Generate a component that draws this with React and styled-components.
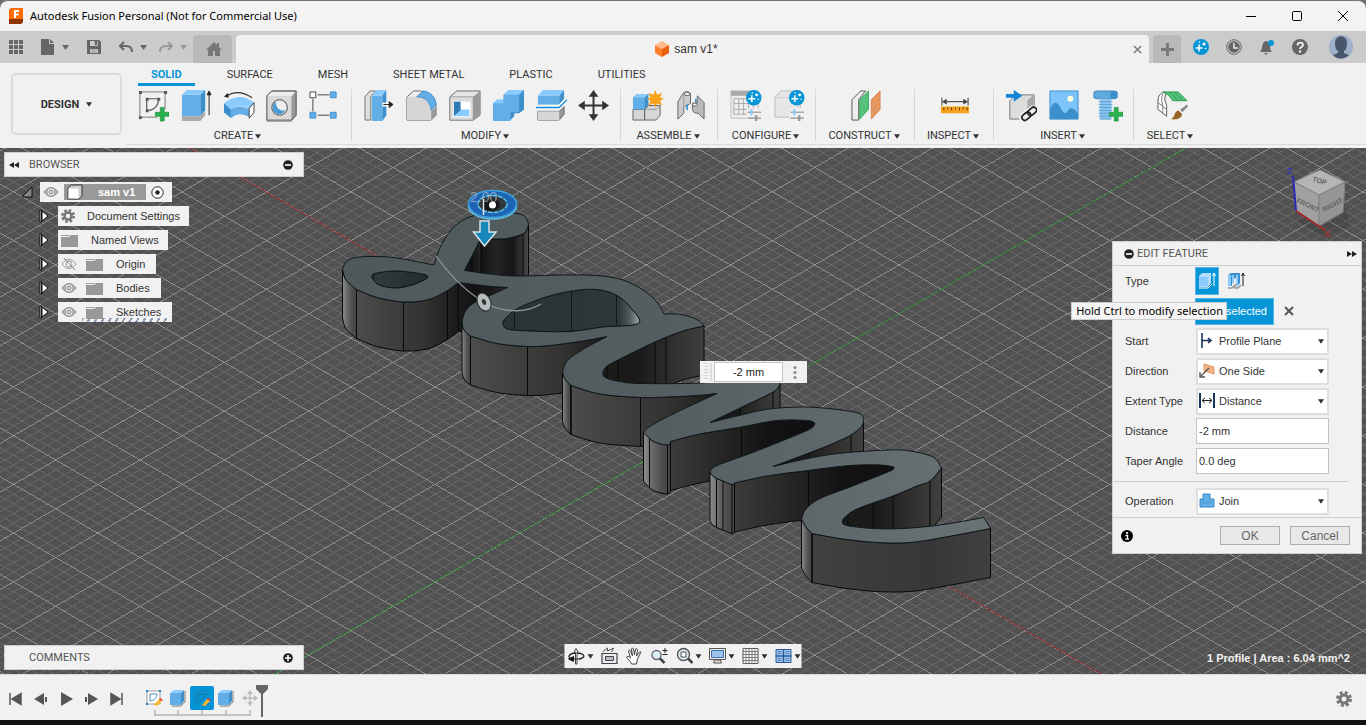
import React from "react";
import styled, { createGlobalStyle } from "styled-components";

const ui = `"Liberation Sans", Arial, sans-serif`;
const caps = `Roboto, "Liberation Sans", sans-serif`;
const system = `"Noto Sans", "Open Sans", sans-serif`;

/* ---------- ribbon icons ---------- */

const Plus = ({ x, y }) => (
  <path
    d={`M${x - 2} ${y - 7}h4v5h5v4h-5v5h-4v-5h-5v-4h5z`}
    fill="#2bb24c"
    stroke="#189339"
    strokeWidth="0.7"
  />
);

const SpinBadge = ({ x, y }) => (
  <g>
    <circle cx={x} cy={y} r="8" fill="#0696d7" />
    <path
      d={`M${x - 2} ${y - 2.5}v7M${x - 5.5} ${y + 1}h7M${x + 3} ${y - 4.5}v3M${x + 1.5} ${y - 3}h3`}
      stroke="#fff"
      strokeWidth="1.6"
    />
    <circle cx={x - 1.5} cy={y - 5} r="0.8" fill="#fff" />
    <circle cx={x + 4.5} cy={y + 1.5} r="0.8" fill="#fff" />
  </g>
);

const icons = {
  sketch: (
    <>
      <path d="M3 2h26v18M3 2v26h18" fill="none" stroke="#777" />
      <path d="M10 9h12M10 9v12M22 10c0 6-4 11-11 11" fill="none" stroke="#555" strokeWidth="1.2" />
      <path
        d="M2 1h3v3H2zM28 1h3v3h-3zM2 27h3v3H2zM9 8h3v3H9zM21 8h3v3h-3zM9 20h3v3H9z"
        fill="#555"
      />
      <Plus x={26} y={25} />
    </>
  ),
  extrude: (
    <>
      <path d="M2 27h19l5-5v4l-5 6H2z" fill="#aaa" />
      <path d="M2 5h19v22H2z" fill="#63aee6" />
      <path d="M2 5l5-5h19l-5 5z" fill="#8acbff" />
      <path d="M21 5l5-5v21l-5 6z" fill="#3d8fcb" />
      <path d="M30 26V3M28 5l2-4 2 4z" stroke="#222" fill="#222" />
    </>
  ),
  revolve: (
    <>
      <path d="M4 6c8-5 17-4 26 2" fill="none" stroke="#333" strokeWidth="1.2" />
      <path d="M1 7l4-4 1 5z" fill="#222" />
      <path d="M1 14C10 5 23 5 32 13l-5 7C20 15 14 16 8 20z" fill="#8acbff" />
      <path d="M1 14l7 6c6-4 12-4 19 0v8c-7-4-13-4-18 1l-8-6z" fill="#63aee6" />
      <path d="M1 14l7 6v9l-7-6z" fill="#3d8fcb" />
      <path d="M27 19l5-6v10l-5 6z" fill="#fff" stroke="#444" />
    </>
  ),
  hole: (
    <>
      <path d="M1 6l5-5h25v25l-5 6H1z" fill="#eee" stroke="#666" />
      <path d="M26 7l5-6v25l-5 5z" fill="#999" />
      <path d="M1 6h25v25H1z" fill="#d9d9d9" />
      <circle cx="14" cy="18" r="8" fill="#eee" stroke="#444" />
      <path d="M10 12a7 7 0 1 0 10 9c-6 1-10-3-10-9z" fill="#4a9ad6" />
      <path d="M1 6l5-5h25v25l-5 5H1z" fill="none" stroke="#666" />
    </>
  ),
  pattern: (
    <>
      <path d="M9 5h12M4 9v13M9 26h12" stroke="#444" />
      <path d="M1 2h6v6H1z" fill="#fff" stroke="#444" />
      <path d="M22 2h6v6h-6zM1 23h6v6H1zM22 23h6v6h-6z" fill="#63aee6" stroke="#4192cf" />
    </>
  ),
  pressPull: (
    <>
      <path d="M2 7l5-6h6L8 7v24H2z" fill="#ddd" stroke="#777" />
      <path d="M9 6h11v26H9z" fill="#63aee6" />
      <path d="M9 6l5-6h10l-4 6z" fill="#8acbff" />
      <path d="M20 6l4-6v26l-4 6z" fill="#3d8fcb" />
      <path d="M20 15h9" stroke="#fff" strokeWidth="4" />
      <path d="M21 15h7M27 12l4 3-4 3z" stroke="#222" fill="#222" />
    </>
  ),
  fillet: (
    <>
      <path d="M1 7l7-6h6c10 1 17 8 17 17v8l-5 5H1z" fill="#eee" stroke="#666" />
      <path d="M1 7h10c9 0 15 6 15 14v10H1z" fill="#d6d6d6" />
      <path d="M26 22l5-5v9l-5 5z" fill="#999" />
      <path d="M11 7l7-6c8 1 13 8 13 14l-5 6c-1-9-6-14-15-14z" fill="#63aee6" stroke="#3d8fcb" />
    </>
  ),
  shell: (
    <>
      <path d="M1 7l7-6h24v25l-7 5H1z" fill="#e6e6e6" stroke="#666" />
      <path d="M25 7l7-6v25l-7 5z" fill="#999" />
      <path d="M1 7h24v24H1z" fill="#dcdcdc" stroke="#777" strokeWidth="0.6" />
      <path d="M4 12h18v16H4z" fill="#fff" />
      <path d="M5 12h7v10l-7 5z" fill="#2f79b5" />
      <path d="M12 20h9v7H5l7-6z" fill="#8acbff" />
    </>
  ),
  combine: (
    <>
      <path d="M1 14l4-4h7V5l5-5h16v20l-5 4h-5v3l-5 5H1z" fill="#3d8fcb" />
      <path d="M1 14h11V5h16v18h-9v9H1z" fill="#63aee6" />
      <path d="M12 5l5-5h16l-5 5zM1 14l4-4h7v4z" fill="#8acbff" />
    </>
  ),
  split: (
    <>
      <path d="M3 22h22l5-5v8l-5 6H3z" fill="#999" stroke="#666" />
      <path d="M3 22h22v9H3z" fill="#d6d6d6" />
      <path d="M3 6l5-6h22l-5 6z" fill="#8acbff" />
      <path d="M3 6h22v9H3z" fill="#63aee6" />
      <path d="M25 6l5-6v9l-5 6z" fill="#3d8fcb" />
      <path d="M1 18h24l8-8" fill="none" stroke="#fff" strokeWidth="4" />
      <path d="M1 18h24l8-8" fill="none" stroke="#1584d6" strokeWidth="1.4" />
    </>
  ),
  move: (
    <>
      <path d="M16 4v24M4 16h24" stroke="#333" strokeWidth="2" />
      <path d="M16 0l5 7H11zM16 32l5-7H11zM0 16l7-5v10zM32 16l-7-5v10z" fill="#333" />
    </>
  ),
  newComponent: (
    <>
      <path d="M1 20h12v11H1zM13 20l4-4h12v10l-4 5H13z" fill="#d6d6d6" stroke="#666" />
      <path d="M13 20h12l4-4" fill="none" stroke="#999" />
      <path d="M1 8l4-4h12v11l-4 5H1z" fill="#3d8fcb" />
      <path d="M1 8h12v12H1z" fill="#63aee6" />
      <path d="M1 8l4-4h12l-4 4z" fill="#8acbff" />
      <path
        d="M24 0l2 5 5-2-2 5 4 1-4 2 2 5-5-2-2 4-2-4-5 2 2-5-4-2 4-1-2-5 5 2z"
        fill="#f9a11b"
      />
    </>
  ),
  joint: (
    <>
      <path d="M3 12L8 4c1-3 7-3 8 0v10l-4 2-3 2v6l-6 6z" fill="#ccc" stroke="#666" />
      <path d="M9 5v12" stroke="#999" />
      <ellipse cx="12.500" cy="4" rx="3" ry="1.800" fill="#eee" stroke="#666" />
      <path d="M12.500 15v6M21.500 9v5" stroke="#1584d6" strokeWidth="1.4" />
      <path d="M23 6l7 7v17l-6-6c-3 0-6-1-6-4v-6l5-1z" fill="#bbb" stroke="#666" />
      <ellipse cx="20.500" cy="15" rx="2.500" ry="1.600" fill="#eee" stroke="#666" />
    </>
  ),
  configTable: (
    <>
      <path d="M1 1h28v28H1z" fill="#eee" stroke="#bbb" />
      <path d="M1 1h28v5H1z" fill="#aaa" />
      <path d="M4 9h20v16H4zM9 9v16M14 9v16M19 9v16M4 14h20M4 20h20" fill="none" stroke="#aaa" />
      <path d="M17 19h16v13H17z" fill="#f1f1f1" />
      <path d="M18 23h14M18 29h14" stroke="#aaa" strokeWidth="1.6" />
      <path d="M22 20v6" stroke="#8acbff" strokeWidth="2.5" />
      <path d="M27 26v6" stroke="#999" strokeWidth="2.5" />
      <SpinBadge x={24.5} y={8} />
    </>
  ),
  configBox: (
    <>
      <path d="M2 8l6-7h20v20l-5 7H2z" fill="#e6e6e6" stroke="#bbb" />
      <path d="M2 8h20" stroke="#ccc" />
      <path d="M17 19h16v13H17z" fill="#f1f1f1" />
      <path d="M18 23h14M18 29h14" stroke="#aaa" strokeWidth="1.6" />
      <path d="M22 20v6" stroke="#8acbff" strokeWidth="2.5" />
      <path d="M27 26v6" stroke="#999" strokeWidth="2.5" />
      <SpinBadge x={24.5} y={8} />
    </>
  ),
  construct: (
    <>
      <path d="M2 10l9-9h5L9 10v21H2z" fill="#eee" stroke="#555" />
      <path d="M10 10l9-9v19l-9 10z" fill="#57c27c" stroke="#3ca862" />
      <path d="M22 10l9-9v19l-9 10z" fill="#e6965f" stroke="#d98550" />
    </>
  ),
  measure: (
    <>
      <path d="M3 8v8M30 8v8M5 12h23" stroke="#555" strokeWidth="1.2" />
      <path d="M3 12l5-3v6zM30 12l-5-3v6z" fill="#444" />
      <path d="M2 17h29v7H2z" fill="#f9a11b" />
      <path d="M5 18v3M9 18v2M13 18v3M17 18v2M21 18v3M25 18v2M29 18v3" stroke="#5a3a00" />
    </>
  ),
  insertLink: (
    <>
      <path d="M5 11l6-6h19v17l-6 8H5z" fill="#ddd" stroke="#777" />
      <path d="M23 11l7-7v18l-7 8z" fill="#aaa" />
      <path d="M1 4h8V0l9 6-9 6V8H1z" fill="#1584d6" />
      <g fill="none" stroke="#f1f1f1" strokeWidth="6">
        <rect x="17" y="24" width="10" height="6" rx="3" transform="rotate(-40 22 27)" />
        <rect x="23" y="20" width="10" height="6" rx="3" transform="rotate(-40 28 23)" />
      </g>
      <g fill="none" stroke="#222" strokeWidth="1.8">
        <rect x="17" y="24" width="10" height="6" rx="3" transform="rotate(-40 22 27)" />
        <rect x="23" y="19" width="10" height="6" rx="3" transform="rotate(-40 28 22)" />
      </g>
    </>
  ),
  canvas: (
    <>
      <path d="M2 1h29v29H2z" fill="#7cc4fa" />
      <path d="M2 20c4-9 7-9 12 0 2 4 4 5 6 2 3-5 6-4 11 2v6H2z" fill="#3d8fcb" />
      <circle cx="23" cy="9" r="3" fill="#ffffe0" />
      <path d="M2 1h29v29H2z" fill="none" stroke="#3d8fcb" />
    </>
  ),
  bolt: (
    <>
      <path d="M3 2l3-1h18l3 1v6l-3 1H6L3 8z" fill="#5ea9dd" stroke="#2f79b5" strokeWidth="0.8" />
      <path d="M20 1h4l3 1v6l-3 1h-4z" fill="#3d8fcb" />
      <path d="M9 9h12v21H9z" fill="#8cc4ec" />
      <path d="M8 12h14M8 15h14M8 18h14M8 21h14M8 24h14M8 27h14M9 30h12" stroke="#5ba4da" />
      <Plus x={26} y={25} />
    </>
  ),
  select: (
    <>
      <path d="M2 13c0-7 2-10 8-11l-1 8 2 6v11L2 20z" fill="#fff" stroke="#555" />
      <path d="M2 13l9 7M7 4c-2 4-1 8 0 13v7" fill="none" stroke="#777" />
      <path d="M7 2h16l9 9H17C15 7 12 4 7 2z" fill="#57c27c" stroke="#2b9a50" />
      <path d="M14 2l9 9M19 2l9 9" stroke="#2b9a50" />
      <path d="M25 20l7-5 1 2-6 6z" fill="#888" />
      <path d="M15 30c5-1 3-7 8-9l4 4c-1 5-7 6-12 5z" fill="#9a6427" />
    </>
  ),
};

const Icon = ({ name, size = 32 }) => (
  <IconSvg viewBox="0 0 33 33" width={size} height={size} aria-hidden="true">
    {icons[name]}
  </IconSvg>
);

const Caret = ({ color = "#333", size = 7 }) => (
  <IconSvg viewBox="0 0 7 5" width={size} height="5" aria-hidden="true">
    <path d="M0 0h7L3.500 5z" fill={color} />
  </IconSvg>
);

const groups = [
  { name: "CREATE", icons: ["sketch", "extrude", "revolve", "hole", "pattern"] },
  { name: "MODIFY", icons: ["pressPull", "fillet", "shell", "combine", "split", "move"] },
  { name: "ASSEMBLE", icons: ["newComponent", "joint"] },
  { name: "CONFIGURE", icons: ["configTable", "configBox"], width: 98 },
  { name: "CONSTRUCT", icons: ["construct"], width: 99 },
  { name: "INSPECT", icons: ["measure"], width: 79 },
  { name: "INSERT", icons: ["insertLink", "canvas", "bolt"] },
  { name: "SELECT", icons: ["select"], width: 74 },
];

const tabs = ["SOLID", "SURFACE", "MESH", "SHEET METAL", "PLASTIC", "UTILITIES"];

/* ---------- 3D scene ---------- */

const DEPTH = 49;

// Outline of the extruded lettering, split into runs at its corners.
// Runs that face the viewer carry a wall shade and the x of their seams.
const outline = [
  { pts: [[342.500, 269], [346, 262], [356, 257.500], [375, 256.500], [397, 258], [434, 265]] },
  { pts: [[434, 265], [440, 248], [451, 230], [466, 218.500], [484, 214], [505, 213], [521.500, 214.500], [527, 220], [528.500, 225]] },
  { pts: [[528.500, 225], [525, 232.500], [517, 236], [507, 238.500], [496, 239], [481, 238]], wall: "dark", seams: [523, 481] },
  { pts: [[481, 238], [474, 252], [464.500, 270.500]], wall: "black", seams: [472] },
  { pts: [[464.500, 270.500], [490, 274], [517, 276], [560, 275], [597, 275.500], [623, 280], [643, 290], [657, 302], [664, 314]] },
  { pts: [[664, 314], [681, 314.500], [697, 319.500], [704, 326]] },
  { pts: [[704, 326], [683, 331], [655, 342], [618, 360], [606, 367], [603, 372]], wall: "inner", seams: [666, 655, 618] },
  { pts: [[603, 372], [604.500, 377], [617, 381], [640, 383.500], [700, 383], [740, 379], [770, 379], [780, 384]] },
  { pts: [[780, 384], [773, 392], [740, 408], [710, 422.500]], wall: "inner", seams: [773, 740] },
  { pts: [[710, 422.500], [737, 416], [763, 410], [787, 407.500], [817, 407.500], [858, 413], [863.500, 422]] },
  { pts: [[863.500, 422], [861, 427], [851, 435], [833, 443.500], [809, 453], [773, 466.500]], wall: "inner", seams: [851, 809] },
  { pts: [[773, 466.500], [810, 458], [843, 453], [888, 450], [910, 451], [933, 457], [941.500, 468]] },
  { pts: [[941.500, 468], [930, 481], [917, 486], [893, 496], [870, 504], [853, 511], [843, 519]], wall: "inner", seams: [930, 893, 873, 848] },
  { pts: [[843, 519], [845, 525], [873, 528.500], [903, 528.500], [940, 525], [984, 517.500]] },
  { pts: [[984, 517.500], [990.500, 528.500]] },
  { pts: [[990.500, 528.500], [943, 537.500], [910, 542.500], [877, 542.500], [843, 539], [812, 533.500]], wall: "flat", seams: [812] },
  { pts: [[812, 533.500], [806, 527], [801.500, 519]], wall: "edge" },
  { pts: [[801.500, 519], [806, 509], [820, 498.500], [850, 487], [883, 474], [893, 469.500], [894, 467]] },
  { pts: [[894, 467], [880, 465], [850, 465.500], [808, 470.500], [767, 476], [734.500, 483]], wall: "deep", seams: [808.500, 734.500] },
  { pts: [[734.500, 483], [732, 484.500], [723, 481], [714, 477], [710, 472]], wall: "edge", seams: [732, 723, 716.500] },
  { pts: [[710, 472], [717, 465.500], [750, 453.500], [783, 440.500], [810, 429], [815, 423]] },
  { pts: [[815, 423], [807, 420.500], [777, 420.500], [741.500, 427], [700, 434], [670.500, 441.500]], wall: "deep", seams: [741.500, 670.500] },
  { pts: [[670.500, 441.500], [667.500, 445], [653.500, 441.500], [643.500, 432.500]], wall: "edge", seams: [667.500, 649.500] },
  { pts: [[643.500, 432.500], [649, 427], [667, 417], [693, 404.500], [717, 393.500]] },
  { pts: [[717, 393.500], [697, 395.500], [668, 397], [641, 397.500], [600, 394], [571, 385.500]], wall: "front", seams: [640.500, 571] },
  { pts: [[571, 385.500], [565, 379], [562.500, 372]], wall: "edge" },
  { pts: [[562.500, 372], [567, 361], [582, 350], [607, 336.500]] },
  { pts: [[607, 336.500], [583, 341], [550, 345.500], [527, 346.500], [497, 343.500], [470.500, 336]], wall: "front", seams: [527.500, 470.500] },
  { pts: [[470.500, 336], [464, 330], [462, 322]], wall: "edge" },
  { pts: [[462, 322], [465, 312], [473, 303.500], [490, 295.500], [507.500, 287.500]] },
  { pts: [[507.500, 287.500], [487, 286], [458.500, 282.500]], wall: "black" },
  { pts: [[458.500, 282.500], [445, 292], [427, 300], [403.500, 302], [377, 297.500], [356.500, 289.500]], wall: "front", seams: [447.500, 403.500, 356.500] },
  { pts: [[356.500, 289.500], [346, 280], [342.500, 269]], wall: "edge" },
];

const holes = [
  {
    fill: "url(#holeS)",
    pts: [[371.500, 277], [375, 273.500], [397, 271], [427, 275.500], [419, 282.500], [398, 288], [379, 285], [371.500, 277]],
    seams: ["M374 273v7"],
  },
  {
    fill: "url(#holeA)",
    pts: [[502.500, 322], [515, 310], [543, 298], [572, 291], [597, 289.500], [617, 295.500], [631, 308], [638.500, 323.500], [603, 327], [570, 331.500], [530, 331], [507, 329], [502.500, 322]],
    seams: ["M514.500 310v19", "M571.500 291v40", "M616.500 295v30"],
  },
];

const shades = {
  dark: ["#151515", "#242424", "#151515", "#4a4a4a"],
  black: ["#1d1d1d", "#121212", "#1a1a1a", "#262626"],
  inner: ["#1c1c1b", "#191919", "#2f2e2d", "#3f3f3e"],
  flat: ["#414140", "#3b3b3a", "#373737", "#404040"],
  edge: ["#8d8d8d", "#686868", "#4e4e4e", "#434343"],
  deep: ["#3c3b3a", "#272726", "#131313", "#101010"],
  front: ["#4d4d4d", "#3f3f3d", "#343331", "#191919"],
};

// Catmull-Rom through the points, written as cubic segments
const curve = (pts) =>
  pts
    .slice(1)
    .map((p, i) => {
      const a = pts[i - 1] || pts[i];
      const b = pts[i];
      const d = pts[i + 2] || p;
      const c1 = [b[0] + (p[0] - a[0]) / 6, b[1] + (p[1] - a[1]) / 6];
      const c2 = [p[0] - (d[0] - b[0]) / 6, p[1] - (d[1] - b[1]) / 6];
      return `C${c1} ${c2} ${p}`;
    })
    .join("");

const lower = (pts) => pts.map(([x, y]) => [x, y + DEPTH]);

const wallPath = (pts) => {
  const back = lower(pts).reverse();
  return `M${pts[0]}${curve(pts)}L${back[0]}${curve(back)}Z`;
};

const heightAt = (pts, x) => {
  for (let i = 1; i < pts.length; i++) {
    const [[x0, y0], [x1, y1]] = [pts[i - 1], pts[i]];
    if ((x - x0) * (x - x1) <= 0 && x0 !== x1) {
      return y0 + ((x - x0) / (x1 - x0)) * (y1 - y0);
    }
  }
  return pts[0][1];
};

const topFace =
  `M${outline[0].pts[0]}` +
  outline.map((run) => curve(run.pts)).join("") +
  "Z" +
  holes.map((hole) => `M${hole.pts[0]}${curve(hole.pts)}Z`).join("");

const walls = outline
  .filter((run) => run.wall)
  .sort((a, b) => Math.min(...a.pts.map((p) => p[1])) - Math.min(...b.pts.map((p) => p[1])));

// Floor grid: two families of parallel lines, every fifth one is major
const SLOPE = 0.5782;
const STEP = 9.752;
const gridLines = (wantMajor) => {
  let d = "";
  for (let n = -100; n < 160; n++) {
    if ((n % 5 === 0) !== wantMajor) continue;
    const down = 362.5 - SLOPE * 55.7 + n * STEP;
    const up = 362.5 + SLOPE * 55.7 + n * STEP;
    d += `M0 ${down}L1366 ${down + SLOPE * 1366}M0 ${up}L1366 ${up - SLOPE * 1366}`;
  }
  return d;
};

const Model = () => (
  <Scene viewBox="0 148 1366 526" preserveAspectRatio="xMidYMid slice" role="img" aria-label="Extruded lettering">
    <defs>
      <linearGradient id="top">
        <stop offset="0" stopColor="#4f585b" />
        <stop offset="0.500" stopColor="#545d60" />
        <stop offset="1" stopColor="#697275" />
      </linearGradient>
      <linearGradient id="holeS">
        <stop offset="0" stopColor="#313b3e" />
        <stop offset="1" stopColor="#222b2e" />
      </linearGradient>
      <linearGradient id="holeA">
        <stop offset="0" stopColor="#2a3336" />
        <stop offset="0.500" stopColor="#2b3538" />
        <stop offset="0.850" stopColor="#2e383b" />
        <stop offset="0.920" stopColor="#4d5659" />
        <stop offset="1" stopColor="#a0a5a7" />
      </linearGradient>
      {Object.entries(shades).map(([name, stops]) => (
        <linearGradient id={`wall-${name}`} key={name}>
          {stops.map((color, i) => (
            <stop key={i} offset={i / 3} stopColor={color} />
          ))}
        </linearGradient>
      ))}
    </defs>
    <rect y="148" width="1366" height="526" fill="#525252" />
    <g shapeRendering="crispEdges" fill="none" strokeWidth="0.866">
      <path d={gridLines(false)} stroke="#6b6b6b" />
      <path d={gridLines(true)} stroke="#979797" />
      <path d="M190 148L1101 674" stroke="#a02525" />
      <path d="M275 674L1186 148" stroke="#21912a" />
    </g>
    <g stroke="#080808">
      {walls.map((run, i) => (
        <g key={i}>
          <path d={wallPath(run.pts)} fill={`url(#wall-${run.wall})`} />
          {(run.seams || []).map((x) => (
            <path key={x} d={`M${x} ${heightAt(run.pts, x)}v${DEPTH}`} />
          ))}
        </g>
      ))}
    </g>
    {holes.map((hole) => (
      <g key={hole.fill} stroke="#0d181c">
        <path d={`M${hole.pts[0]}${curve(hole.pts)}Z`} fill={hole.fill} />
        {hole.seams.map((d) => (
          <path key={d} d={d} />
        ))}
      </g>
    ))}
    <path d={topFace} fill="url(#top)" fillRule="evenodd" stroke="#0d181c" strokeLinejoin="round" />
    <path d="M436 256C450 276 464 289 480 300C500 313 525 314 541 304" fill="none" stroke="#909698" strokeWidth="1.3" />
    <ellipse cx="484" cy="302" rx="6.500" ry="9.500" transform="rotate(-24 484 302)" fill="#b9bcbd" stroke="#202628" />
    <ellipse cx="484" cy="302" rx="2" ry="3" transform="rotate(-24 484 302)" fill="#333" />
    <ellipse cx="492.500" cy="206" rx="24" ry="13" fill="none" stroke="#62c3ea" strokeWidth="1.5" />
    <ellipse cx="492.500" cy="204" rx="24" ry="13.500" fill="#1d65b4" stroke="#3fa2dc" strokeWidth="1.5" />
    <ellipse cx="492.500" cy="204" rx="14.500" ry="8.500" fill="#30393d" stroke="#62c3ea" strokeWidth="1.500" strokeDasharray="5 1" />
    <ellipse cx="491" cy="205" rx="9" ry="6" fill="#15191b" />
    <path d="M483.500 199v16" stroke="#e8eef0" strokeWidth="1.4" />
    <circle cx="492.500" cy="205" r="3.500" fill="#fff" />
    <SceneText x="470" y="202">2.00</SceneText>
    <path d="M480 221h9v11h7l-11.500 14L473.500 232h6.500z" fill="#1787ba" stroke="#d7e2e6" strokeWidth="1.5" />
  </Scene>
);

const ViewCube = () => (
  <Cube viewBox="0 0 66 78" width="66" height="78" role="img" aria-label="View cube">
    <path d="M13 55l28 18 26-12-4-18z" fill="#2a2a2a" fillOpacity="0.2" />
    <path d="M37 5l25 12-26 13L11 17z" fill="#b5b5b5" stroke="#8b8b8b" />
    <path d="M11 17l25 13v31L13 46z" fill="#a1a1a1" stroke="#808080" />
    <path d="M36 30l26-13-2 30-24 14z" fill="#959595" stroke="#808080" />
    <path d="M10 11l3 35" stroke="#2a2ab8" strokeWidth="2" />
    <path d="M13 46l29 19" stroke="#a52828" strokeWidth="2" />
    <CubeText x="13" y="37" transform="rotate(26 13 37)">FRONT</CubeText>
    <CubeText x="41" y="47" transform="rotate(-27 41 47)">RIGHT</CubeText>
    <CubeText x="29" y="16" transform="rotate(16 29 16)">TOP</CubeText>
    <AxisText x="4" y="9" $color="#3535b8">Z</AxisText>
    <AxisText x="41" y="72" $color="#b03030">X</AxisText>
  </Cube>
);

/* ---------- panels ---------- */

const Eye = ({ off }) => (
  <IconSvg viewBox="0 0 16 12" width="16" height="12">
    <path d="M1 6c4-6 10-6 14 0-4 6-10 6-14 0z" fill={off ? "none" : "#aaa"} stroke="#999" />
    <circle cx="8" cy="6" r="3" fill={off ? "none" : "#999"} stroke={off ? "#999" : "#f1f1f1"} />
    {off ? <path d="M3 0l11 12" stroke="#888" /> : <circle cx="8" cy="6" r="1" fill="#f1f1f1" />}
  </IconSvg>
);

const Folder = () => (
  <IconSvg viewBox="0 0 17 13" width="17" height="13">
    <path d="M0 1h8l1 1H0zM0 3h8l2-2h7v12H0z" fill="#999" />
  </IconSvg>
);

const Gear = ({ size = 14, color = "#777" }) => (
  <IconSvg viewBox="0 0 16 16" width={size} height={size}>
    <circle cx="8" cy="8" r="6.500" fill="none" stroke={color} strokeWidth="3" strokeDasharray="2.900 2.200" />
    <circle cx="8" cy="8" r="4" fill="none" stroke={color} strokeWidth="3" />
  </IconSvg>
);

const Dot = ({ plus }) => (
  <IconSvg viewBox="0 0 10 10" width="10" height="10">
    <circle cx="5" cy="5" r="4.800" fill="#222" />
    <path d={plus ? "M2 5h6M5 2v6" : "M2 5h6"} stroke="#fff" strokeWidth="1.600" />
  </IconSvg>
);

const Arrows = ({ left }) => (
  <IconSvg viewBox="0 0 10 8" width="10" height="8">
    <path d={left ? "M5 1v6L0 4zM10 1v6L5 4z" : "M0 1v6l5-3zM5 1v6l5-3z"} fill="#222" />
  </IconSvg>
);

const nodes = [
  { name: "Document Settings", icon: <Gear />, gap: 12 },
  { name: "Named Views", icon: <Folder />, gap: 13 },
  { name: "Origin", eye: "off", icon: <Folder />, gap: 13 },
  { name: "Bodies", eye: "on", icon: <Folder />, gap: 13 },
  { name: "Sketches", eye: "on", icon: <Folder />, gap: 13, hatched: true },
];

const BrowserPanel = () => (
  <BrowserWrap>
    <PanelBar>
      <PlainButton aria-label="Collapse browser">
        <Arrows left />
      </PlainButton>
      <PanelTitle>BROWSER</PanelTitle>
      <PlainButton aria-label="Minimise browser">
        <Dot />
      </PlainButton>
    </PanelBar>
    <Tree>
      <TreeRow $root>
        <IconSvg viewBox="0 0 12 12" width="12" height="12">
          <path d="M11 1v10H1z" fill="#888" stroke="#111" />
        </IconSvg>
        <Chip $tight>
          <Eye />
          <ActiveName>
            <IconSvg viewBox="0 0 16 16" width="16" height="16">
              <path d="M1 4l3-3h11v11l-3 3H1z" fill="#ccc" stroke="#333" />
              <path d="M1.500 4.500h10v10h-10z" fill="#fff" />
            </IconSvg>
            sam v1
          </ActiveName>
          <IconSvg viewBox="0 0 13 13" width="13" height="13">
            <circle cx="6.500" cy="6.500" r="5.700" fill="#fff" stroke="#222" />
            <circle cx="6.500" cy="6.500" r="2.200" fill="#222" />
          </IconSvg>
        </Chip>
      </TreeRow>
      {nodes.map((node) => (
        <TreeRow key={node.name}>
          <IconSvg viewBox="0 0 10 14" width="10" height="14">
            <path d="M1 1h1.500v12H1zM3 2l6 5-6 5z" fill="#fff" stroke="#111" />
          </IconSvg>
          <Chip>
            {node.eye && <Eye off={node.eye === "off"} />}
            <NodeLabel $gap={node.gap} $hatched={node.hatched} $indent={!!node.eye}>
              {node.icon}
              <span>{node.name}</span>
            </NodeLabel>
          </Chip>
        </TreeRow>
      ))}
    </Tree>
  </BrowserWrap>
);

const fieldIcons = {
  start: <path d="M3 0v15M3 7.500h9M9 5l3 2.500L9 10" fill="none" stroke="#16325f" strokeWidth="1.6" />,
  direction: (
    <>
      <path d="M5 1l10 3v7L5 8z" fill="#f4b183" stroke="#e09a66" />
      <path d="M10 5l-8 8M1 9v5h5" fill="none" stroke="#555" strokeWidth="1.4" />
    </>
  ),
  extent: (
    <>
      <path d="M1 0v15M15 0v15" stroke="#16325f" strokeWidth="2" />
      <path d="M3 7.500h10M6 5L3 7.500 6 10M10 5l3 2.500L10 10" fill="none" stroke="#222" />
    </>
  ),
  join: (
    <>
      <path d="M4 1h7v5h4v8H1V6h3z" fill="#63aee6" stroke="#3d86c4" />
      <path d="M4 6v4h7V6" fill="none" stroke="#4a96d2" />
    </>
  ),
};

const SelectField = ({ id, icon, label, value }) => (
  <Row>
    <label htmlFor={id}>{label}</label>
    <SelectBox>
      <IconSvg viewBox="0 0 16 16" width="16" height="16">
        {fieldIcons[icon]}
      </IconSvg>
      <select id={id}>
        <option>{value}</option>
      </select>
      <Caret size={6} />
    </SelectBox>
  </Row>
);

const EditPanel = () => (
  <EditWrap>
    <EditHeader>
      <Dot />
      <PanelTitle>EDIT FEATURE</PanelTitle>
      <Arrows />
    </EditHeader>
    <Row>
      <RowName>Type</RowName>
      <TypeButton $active aria-label="Extrude">
        <IconSvg viewBox="0 0 18 18" width="18" height="18">
          <path d="M1 4l3-3h9v10l-3 4H1z" fill="#b5dcfa" />
          <path d="M1 5h9v9H1z" fill="#8acbff" />
          <path d="M1 16h9l4-4M16 14V2M14.500 4L16 1l1.500 3" fill="none" stroke="#fff" />
        </IconSvg>
      </TypeButton>
      <TypeButton aria-label="Thin extrude">
        <IconSvg viewBox="0 0 18 18" width="18" height="18">
          <path d="M1 3l3-2h9v10l-3 4V6H8l-3 4v4H1z" fill="#3d8fcb" />
          <path d="M1 3h3v11H1zM5 3h2v8H5zM9 3h2v11H9z" fill="#8acbff" />
          <path d="M1 16h4l3-3v3h3l3-3" fill="none" stroke="#999" strokeWidth="1.600" />
          <path d="M16 14V2M14.500 4L16 1l1.500 3" fill="none" stroke="#222" />
        </IconSvg>
      </TypeButton>
    </Row>
    <Row>
      <Tooltip role="tooltip">Hold Ctrl to modify selection</Tooltip>
      <Picked aria-label="1 profile selected">selected</Picked>
      <ClearButton aria-label="Clear selection">
        <IconSvg viewBox="0 0 10 10" width="10" height="10">
          <path d="M1 1l8 8M9 1L1 9" stroke="#555" strokeWidth="2" />
        </IconSvg>
      </ClearButton>
    </Row>
    <SelectField id="start" icon="start" label="Start" value="Profile Plane" />
    <SelectField id="direction" icon="direction" label="Direction" value="One Side" />
    <SelectField id="extent" icon="extent" label="Extent Type" value="Distance" />
    <Row>
      <label htmlFor="distance">Distance</label>
      <Field id="distance" defaultValue="-2 mm" />
    </Row>
    <Row>
      <label htmlFor="taper">Taper Angle</label>
      <Field id="taper" defaultValue="0.0 deg" />
    </Row>
    <Divider />
    <SelectField id="operation" icon="join" label="Operation" value="Join" />
    <EditFooter>
      <IconSvg viewBox="0 0 12 12" width="12" height="12">
        <circle cx="6" cy="6" r="6" fill="#000" />
        <path d="M4.500 5.500H6.500V9M4.300 9.200h3.800" fill="none" stroke="#fff" strokeWidth="1.300" />
        <circle cx="6" cy="3" r="1.100" fill="#fff" />
      </IconSvg>
      <DialogButton>OK</DialogButton>
      <DialogButton>Cancel</DialogButton>
    </EditFooter>
  </EditWrap>
);

const navIcons = [
  {
    name: "Orbit",
    caret: true,
    art: (
      <>
        <path d="M4 12c-5-2-2-6 5-6s11 4 3 6" fill="none" stroke="#222" strokeWidth="1.300" />
        <path d="M8 17V5H6.500L8.500 1.500 10.500 5H9.500v12z" fill="#fff" stroke="#444" />
        <path d="M1 12l5-2.500v5zM6 12h7" fill="#111" stroke="#222" />
      </>
    ),
  },
  {
    name: "Look At",
    art: (
      <>
        <path d="M1.500 6.500h15v10h-15z" fill="#ececf0" stroke="#444" strokeWidth="1.200" />
        <path d="M5 9.500h8v4H5z" fill="#b7bccb" stroke="#444" />
        <path d="M2 5l5-4v3l6-3-2 4" fill="none" stroke="#555" />
      </>
    ),
  },
  {
    name: "Pan",
    art: (
      <path
        d="M6 17c-1-3-4-5-5-7 1-1 2-1 4 1L3 4c0-1 2-1 2 0l2 5-1-7c0-1 2-1 2 0l1 6 1-6c1-1 2 0 2 1l-1 6 3-4c1-1 2 0 1 1l-3 6-1 5z"
        fill="#fff"
        stroke="#444"
      />
    ),
  },
  {
    name: "Zoom",
    art: (
      <>
        <path d="M9 11l5 5" stroke="#444" strokeWidth="2.500" />
        <circle cx="6" cy="8" r="4.500" fill="#dceef2" stroke="#667" strokeWidth="1.300" />
        <path d="M12 3.500h5M14.500 1v5M12 7.500h5" stroke="#222" />
      </>
    ),
  },
  {
    name: "Fit",
    caret: true,
    art: (
      <>
        <path d="M12 11l5 5" stroke="#444" strokeWidth="2.500" />
        <circle cx="8" cy="7.500" r="6" fill="#dceef2" stroke="#555" strokeWidth="1.400" />
        <path d="M5.500 5h5v5h-5z" fill="#fff" stroke="#555" />
      </>
    ),
  },
  {
    name: "Display",
    caret: true,
    art: (
      <>
        <path d="M1 1.500h16v11H1z" fill="#eee" stroke="#555" />
        <path d="M3 3.500h12v7H3z" fill="#9cc3ee" stroke="#3f6fa8" />
        <path d="M6 13h6l1 3H5z" fill="#ddd" stroke="#555" />
      </>
    ),
  },
  {
    name: "Grid",
    caret: true,
    art: (
      <>
        <path d="M1.500 1.500h15v15h-15z" fill="#fff" stroke="#555" />
        <path d="M4.500 1v16M7.500 1v16M10.500 1v16M13.500 1v16M1 4.500h16M1 7.500h16M1 10.500h16M1 13.500h16" stroke="#777" />
      </>
    ),
  },
  {
    name: "Viewports",
    caret: true,
    art: (
      <>
        <path d="M1.500 2.500h15v13h-15z" fill="#9cc3ee" stroke="#2d5a96" />
        <path d="M9 2v14M1 9h16" stroke="#2d5a96" strokeWidth="1.400" />
        <path d="M3.500 4.500h3v2h-3zM11.500 4.500h3v2h-3zM3.500 11.500h3v2h-3zM11.500 11.500h3v2h-3z" fill="none" stroke="#5f8cc0" />
      </>
    ),
  },
];

const playback = [
  ["To start", "M1 1v12M12 1.500v11L3 7z"],
  ["Step back", "M10 1v12L0 7zM11 5h2v5h-2z"],
  ["Play", "M2 0l12 7-12 7z"],
  ["Step forward", "M4 1v12l10-6zM1 5h2v5H1z"],
  ["To end", "M13 1v12M2 1.500v11L11 7z"],
];

const TimelineBox = () => (
  <IconSvg viewBox="0 0 18 18" width="18" height="18">
    <path d="M1 4l4-3h9l-2 3v12H1z" fill="#8acbff" />
    <path d="M1 4h11v12H1z" fill="#63aee6" />
    <path d="M12 4l3-3v11l-3 4z" fill="#3d8fcb" />
    <path d="M3 17h9l4-4V2" fill="none" stroke="#777" />
  </IconSvg>
);

const TimelineSketch = ({ dark }) => (
  <IconSvg viewBox="0 0 18 18" width="18" height="18">
    <path d="M2 2h13v13H2z" fill={dark ? "none" : "#fff"} stroke={dark ? "#1b7fb0" : "#999"} />
    <path d="M5 5h7c0 4-2 6-7 7z" fill="none" stroke={dark ? "#1b6f9b" : "#3f8ecb"} />
    {!dark && <path d="M1 1h2v2H1zM14 1h2v2h-2zM1 14h2v2H1z" fill="#1584d6" />}
    <path d="M9 16l5-6 3 2-5 5z" fill="#fbb831" />
    <path d="M14 10l1-1 3 2-1 1z" fill="#e33" />
  </IconSvg>
);

export default function App() {
  return (
    <Page>
      <GlobalStyle />
      <TitleBar>
        <IconSvg viewBox="0 0 14 16" width="14" height="16">
          <path d="M0 2l2-2h12v14l-2 2H0z" fill="#ff6b00" />
          <path d="M0 11h14v3l-2 2H0z" fill="#8f3500" />
          <path d="M5 2h5v2H7v1.500h2.500v2H7V10H5z" fill="#fff" />
        </IconSvg>
        <h1>Autodesk Fusion Personal (Not for Commercial Use)</h1>
        <WindowButton aria-label="Minimise">
          <IconSvg viewBox="0 0 10 10" width="10" height="10">
            <path d="M0 5.500h10" stroke="#000" />
          </IconSvg>
        </WindowButton>
        <WindowButton aria-label="Maximise">
          <IconSvg viewBox="0 0 10 10" width="10" height="10">
            <rect x="0.500" y="0.500" width="9" height="9" rx="1" fill="none" stroke="#000" />
          </IconSvg>
        </WindowButton>
        <WindowButton aria-label="Close">
          <IconSvg viewBox="0 0 10 10" width="10" height="10">
            <path d="M0 0l10 10M10 0L0 10" stroke="#000" />
          </IconSvg>
        </WindowButton>
      </TitleBar>

      <TabBar>
        <QuickTools>
          <PlainButton aria-label="Data panel">
            <IconSvg viewBox="0 0 14 14" width="14" height="14">
              <path
                d="M0 0h4v4H0zM5 0h4v4H5zM10 0h4v4h-4zM0 5h4v4H0zM5 5h4v4H5zM10 5h4v4h-4zM0 10h4v4H0zM5 10h4v4H5zM10 10h4v4h-4z"
                fill="#666"
              />
            </IconSvg>
          </PlainButton>
          <PlainButton aria-label="File">
            <IconSvg viewBox="0 0 14 16" width="14" height="16">
              <path d="M0 0h8v5h5v11H0zM9 0l4 4H9z" fill="#666" />
            </IconSvg>
            <Caret color="#666" />
          </PlainButton>
          <PlainButton aria-label="Save">
            <IconSvg viewBox="0 0 14 14" width="14" height="14">
              <path d="M0 0h12l2 2v12H0z" fill="#666" />
              <path d="M3 1h8v5H3zM3 9h8v4H3z" fill="#cbcbcb" />
              <path d="M8 1h2v4H8zM4 10h6M4 12h6" fill="#666" stroke="#666" strokeWidth="0.500" />
            </IconSvg>
          </PlainButton>
          <PlainButton aria-label="Undo">
            <IconSvg viewBox="0 0 14 12" width="14" height="12">
              <path d="M5 1L1 5l4 4M1 5h6c4 0 6 2 6 6" fill="none" stroke="#666" strokeWidth="2" />
            </IconSvg>
            <Caret color="#666" />
          </PlainButton>
          <PlainButton aria-label="Redo">
            <IconSvg viewBox="0 0 14 12" width="14" height="12">
              <path d="M9 1l4 4-4 4M13 5H7c-4 0-6 2-6 6" fill="none" stroke="#999" strokeWidth="2" />
            </IconSvg>
            <Caret color="#999" />
          </PlainButton>
        </QuickTools>
        <HomeTab aria-label="Home">
          <IconSvg viewBox="0 0 16 14" width="16" height="14">
            <path d="M8 0l3 3V1h2v4l3 3h-2v6H9V9H7v5H2V8H0z" fill="#777" />
          </IconSvg>
        </HomeTab>
        <DocTab>
          <DocName>
            <IconSvg viewBox="0 0 14 16" width="14" height="16">
              <path d="M7 0l7 4-7 4-7-4z" fill="#ffb98a" />
              <path d="M0 4l7 4v8l-7-4z" fill="#ff7f2a" />
              <path d="M14 4L7 8v8l7-4z" fill="#e95f0c" />
            </IconSvg>
            sam v1*
          </DocName>
          <PlainButton aria-label="Close document">
            <IconSvg viewBox="0 0 10 10" width="9" height="9">
              <path d="M1 1l8 8M9 1L1 9" stroke="#777" strokeWidth="1.500" />
            </IconSvg>
          </PlainButton>
        </DocTab>
        <NewTab aria-label="New design">
          <IconSvg viewBox="0 0 14 14" width="13" height="13">
            <path d="M7 0v14M0 7h14" stroke="#777" strokeWidth="3" />
          </IconSvg>
        </NewTab>
        <Account>
          <IconSvg viewBox="0 0 16 16" width="16" height="16">
            <SpinBadge x={8} y={8} />
          </IconSvg>
          <IconSvg viewBox="0 0 16 16" width="16" height="16">
            <circle cx="8" cy="8" r="7.300" fill="none" stroke="#666" />
            <circle cx="8" cy="8" r="5.800" fill="#666" />
            <path d="M8 4v5h4" fill="none" stroke="#eee" strokeWidth="1.400" />
          </IconSvg>
          <IconSvg viewBox="0 0 16 16" width="16" height="16">
            <path d="M1 13c3-2 1-10 6-11 6 1 3 9 6 11zM5 14h4l-2 2z" fill="#666" />
            <circle cx="12" cy="4" r="3" fill="#0696d7" />
          </IconSvg>
          <IconSvg viewBox="0 0 16 16" width="16" height="16">
            <circle cx="8" cy="8" r="8" fill="#666" />
            <path d="M5.500 6.500c0-4 5.500-3.500 5.500-.5 0 2-3 2-3 4" fill="none" stroke="#eee" strokeWidth="1.800" />
            <circle cx="8" cy="12.500" r="1.200" fill="#eee" />
          </IconSvg>
          <IconSvg viewBox="0 0 24 24" width="24" height="24">
            <circle cx="12" cy="12" r="12" fill="#9fb0cb" />
            <path d="M6 8c0-9 12-9 12 0 0 4-1 7-3 8v2l5 2c-4 4-12 5-16 0l5-2v-2c-2-1-3-4-3-8z" fill="#47566c" />
          </IconSvg>
        </Account>
      </TabBar>

      <Ribbon>
        <Workspace>
          DESIGN <Caret size={6} />
        </Workspace>
        <RibbonMain>
          <Tabs>
            {tabs.map((tab) => (
              <TabButton key={tab} $active={tab === "SOLID"}>
                {tab}
              </TabButton>
            ))}
          </Tabs>
          <Groups>
            {groups.map((group) => (
              <Group key={group.name} $width={group.width}>
                <Tools>
                  {group.icons.map((name) => (
                    <PlainButton key={name} aria-label={name}>
                      <Icon name={name} />
                    </PlainButton>
                  ))}
                </Tools>
                <GroupName>
                  {group.name} <Caret size={6} />
                </GroupName>
              </Group>
            ))}
          </Groups>
        </RibbonMain>
      </Ribbon>

      <Viewport>
        <Model />
        <ViewCube />
        <BrowserPanel />
        <ValueBox>
          <Grip />
          <ValueInput aria-label="Distance" defaultValue="-2 mm" />
          <PlainButton aria-label="More">
            <IconSvg viewBox="0 0 4 14" width="4" height="14">
              <circle cx="2" cy="2.500" r="1.500" fill="#888" />
              <circle cx="2" cy="7.500" r="1.500" fill="#888" />
              <circle cx="2" cy="12.500" r="1.500" fill="#888" />
            </IconSvg>
          </PlainButton>
        </ValueBox>
        <EditPanel />
        <Comments>
          <PanelBar>
            <PanelTitle $inset>COMMENTS</PanelTitle>
            <PlainButton aria-label="Expand comments">
              <Dot plus />
            </PlainButton>
          </PanelBar>
        </Comments>
        <NavBar>
          {navIcons.map((item) => (
            <NavButton key={item.name} aria-label={item.name}>
              <IconSvg viewBox="0 0 18 18" width="18" height="18">
                {item.art}
              </IconSvg>
              {item.caret && <Caret size={6} />}
            </NavButton>
          ))}
        </NavBar>
        <Status>1 Profile | Area : 6.04 mm^2</Status>
      </Viewport>

      <Timeline>
        <Playback>
          {playback.map(([name, d]) => (
            <PlainButton key={name} aria-label={name}>
              <IconSvg viewBox="0 0 14 14" width="14" height="14">
                <path d={d} fill="#555" stroke="#555" strokeWidth={name.startsWith("To") ? 1.5 : 0} />
              </IconSvg>
            </PlainButton>
          ))}
        </Playback>
        <History>
          <Features>
            <Feature><TimelineSketch /></Feature>
            <Feature><TimelineBox /></Feature>
            <Feature $active><TimelineSketch dark /></Feature>
            <Feature><TimelineBox /></Feature>
            <Feature>
              <IconSvg viewBox="0 0 16 16" width="16" height="16">
                <path d="M8 2v12M2 8h12" stroke="#bbb" strokeWidth="1.500" />
                <path d="M8 0l3 4H5zM8 16l3-4H5zM0 8l4-3v6zM16 8l-4-3v6z" fill="#bbb" />
              </IconSvg>
            </Feature>
          </Features>
          <IconSvg viewBox="0 0 120 8" width="120" height="8">
            <path d="M13 0v5h95V0M36 0v5M60 0v5M84 0v5" fill="none" stroke="#c2c2c2" strokeWidth="2" />
          </IconSvg>
        </History>
        <Marker viewBox="0 0 12 32" width="12" height="32">
          <path d="M0 0h12v4L7 9v23H5V9L0 4z" fill="#666" />
        </Marker>
        <SettingsButton aria-label="Settings">
          <Gear size={16} />
        </SettingsButton>
      </Timeline>
      <Taskbar />
    </Page>
  );
}

const GlobalStyle = createGlobalStyle`
  * {
    box-sizing: border-box;
  }
  body {
    margin: 0;
    background: #6f6f6f;
  }
  button,
  input,
  select {
    font: inherit;
    color: inherit;
  }
`;
const Page = styled.div`
  height: 100vh;
  display: flex;
  flex-direction: column;
  overflow: hidden;
  font-family: ${ui};
  font-size: 11px;
  color: #333;
`;
const IconSvg = styled.svg`
  display: block;
  flex: none;
`;
const PlainButton = styled.button`
  display: flex;
  align-items: center;
  gap: 7px;
  padding: 0;
  border: 0;
  background: none;
`;
const TitleBar = styled.header`
  flex: none;
  height: 31px;
  display: flex;
  align-items: center;
  padding-left: 9px;
  border-top: 1px solid #767676;
  border-radius: 8px 8px 0 0;
  background: #f3f3f3;
  h1 {
    flex: 1;
    margin: 0 0 0 7px;
    font-family: ${system};
    font-weight: 400;
    font-size: 11px;
    line-height: 16px;
    color: #000;
  }
`;
const WindowButton = styled(PlainButton)`
  width: 46px;
  justify-content: center;
`;
const TabBar = styled.div`
  flex: none;
  height: 32px;
  display: flex;
  align-items: flex-end;
  background: #cbcbcb;
`;
const QuickTools = styled.div`
  align-self: center;
  width: 193px;
  display: flex;
  align-items: center;
  gap: 18px;
  padding-left: 9px;
  ${PlainButton}:nth-child(4) {
    margin-right: -6px;
  }
`;
const HomeTab = styled(PlainButton)`
  width: 39px;
  height: 28px;
  padding-left: 2px;
  justify-content: center;
  border-radius: 4px 4px 0 0;
  background: #b9b9b9;
`;
const DocTab = styled.div`
  flex: 1;
  height: 28px;
  display: flex;
  align-items: center;
  margin: 0 4px;
  padding-right: 7px;
  border-radius: 4px 4px 0 0;
  background: #f1f1f1;
`;
const DocName = styled.div`
  flex: 1;
  display: flex;
  align-items: center;
  justify-content: center;
  gap: 5px;
  padding-left: 4px;
  font-size: 12px;
`;
const NewTab = styled(HomeTab)`
  width: 28px;
  padding: 0;
`;
const Account = styled.div`
  align-self: center;
  display: flex;
  align-items: center;
  gap: 17px;
  padding: 0 13px 0 12px;
  svg:last-child {
    margin-left: 4px;
  }
`;
const Ribbon = styled.nav`
  flex: none;
  height: 85px;
  display: flex;
  padding-left: 11px;
  background: #f1f1f1;
  font-family: ${caps};
`;
const Workspace = styled.button`
  width: 111px;
  height: 62px;
  display: flex;
  align-items: center;
  justify-content: center;
  gap: 7px;
  margin-top: 10px;
  border: 2px solid #dcdcdc;
  border-radius: 5px;
  background: #f1f1f1;
  font-weight: 700;
`;
const RibbonMain = styled.div`
  flex: 1;
  padding-left: 4px;
`;
const Tabs = styled.div`
  display: flex;
  gap: 19px;
  padding-left: 12px;
`;
const TabButton = styled.button`
  height: 23px;
  padding: 2px 13px 0;
  border: 0;
  border-bottom: 3px solid ${(props) => (props.$active ? "#0696d7" : "transparent")};
  background: none;
  font-weight: ${(props) => (props.$active ? 700 : 400)};
  color: ${(props) => (props.$active ? "#0696d7" : "#333")};
`;
const Groups = styled.div`
  display: flex;
  padding: 3px 0;
  border-bottom: 1px solid #dcdcdc;
`;
const Group = styled.div`
  flex: none;
  width: ${(props) => (props.$width ? `${props.$width}px` : "auto")};
  height: 52px;
  display: flex;
  flex-direction: column;
  align-items: center;
  padding: 1px 10px 0 11px;
  border-right: 1px solid #d8d8d8;
  &:last-child {
    border-right: 0;
  }
`;
const Tools = styled.div`
  display: flex;
  gap: 11px;
`;
const GroupName = styled(PlainButton)`
  gap: 2px;
  margin-top: 7px;
  padding-right: 3px;
  line-height: 14px;
  white-space: nowrap;
`;
const Viewport = styled.main`
  flex: 1;
  position: relative;
  overflow: hidden;
  background: #535353;
`;
const Scene = styled.svg`
  position: absolute;
  inset: 0;
  width: 100%;
  height: 100%;
`;
const SceneText = styled.text`
  font-size: 14px;
  fill: #c5cbcd;
  fill-opacity: 0.6;
`;
const Cube = styled.svg`
  position: absolute;
  top: 17px;
  right: 17px;
`;
const CubeText = styled.text`
  font-size: 7px;
  font-weight: 700;
  fill: #5f6266;
`;
const AxisText = styled.text`
  font-size: 9px;
  font-weight: 700;
  fill: ${(props) => props.$color};
`;
const BrowserWrap = styled.aside`
  position: absolute;
  top: 4px;
  left: 4px;
`;
const PanelBar = styled.div`
  width: 300px;
  height: 25px;
  display: flex;
  align-items: center;
  padding: 0 10px 0 4px;
  border: 1px solid #cfcfcf;
  background: #f1f1f1;
`;
const PanelTitle = styled.h2`
  flex: 1;
  margin: 0;
  padding-left: ${(props) => (props.$inset ? "20px" : "10px")};
  font-family: ${caps};
  font-weight: 400;
  font-size: 11px;
  color: #555;
`;
const Tree = styled.div`
  padding-top: 3px;
`;
const TreeRow = styled.div`
  height: 24px;
  display: flex;
  align-items: center;
  gap: ${(props) => (props.$root ? "7px" : "9px")};
  padding-left: ${(props) => (props.$root ? "17px" : "35px")};
`;
const Chip = styled.div`
  height: 20px;
  display: flex;
  align-items: center;
  gap: ${(props) => (props.$tight ? "5px" : "0")};
  padding: ${(props) => (props.$tight ? "0 8px 0 3px" : "0 2px 0 3px")};
  background: #f1f1f1;
`;
const ActiveName = styled.div`
  width: 82px;
  height: 16px;
  display: flex;
  align-items: center;
  gap: 15px;
  padding-left: 3px;
  background: #999;
  font-weight: 700;
  color: #fff;
`;
const NodeLabel = styled.div`
  height: 20px;
  display: flex;
  align-items: center;
  gap: ${(props) => props.$gap}px;
  margin-left: ${(props) => (props.$indent ? "5px" : "0")};
  padding-left: ${(props) => (props.$indent ? "4px" : "0")};
  padding-right: ${(props) => (props.$indent ? "9px" : "7px")};
  background: ${(props) =>
    props.$hatched
      ? "repeating-linear-gradient(120deg, #8c9db8 0 2px, transparent 2px 6px) bottom / 100% 4px no-repeat"
      : "none"};
`;
const ValueBox = styled.div`
  position: absolute;
  top: 213px;
  left: 700px;
  height: 22px;
  display: flex;
  align-items: center;
  padding-right: 10px;
  background: #f1f1f1;
`;
const Grip = styled.div`
  width: 8px;
  height: 18px;
  margin: 0 2px 0 4px;
  border-right: 2px solid #ddd;
  background: repeating-linear-gradient(#d5d5d5 0 1px, transparent 1px 3px) left / 4px 100% no-repeat;
`;
const ValueInput = styled.input`
  width: 69px;
  height: 20px;
  margin-right: 10px;
  padding: 0;
  border: 1px solid #c4c4c4;
  background: #fff;
  text-align: center;
  color: #222;
`;
const EditWrap = styled.section`
  position: absolute;
  top: 93px;
  right: 4px;
  width: 250px;
  border: 1px solid #cfcfcf;
  background: #f1f1f1;
`;
const EditHeader = styled.header`
  height: 24px;
  display: flex;
  align-items: center;
  padding: 0 4px 0 11px;
  border-bottom: 1px solid #cfcfcf;
  h2 {
    padding-left: 3px;
  }
`;
const Row = styled.div`
  position: relative;
  height: 30px;
  display: flex;
  align-items: center;
  padding-left: 12px;
  > label {
    width: 71px;
  }
`;
const RowName = styled.span`
  width: 70px;
`;
const TypeButton = styled(PlainButton)`
  width: 24px;
  height: 28px;
  justify-content: center;
  margin-right: 5px;
  border: 1px solid ${(props) => (props.$active ? "#52b5e2" : "transparent")};
  background: ${(props) => (props.$active ? "#0696d7" : "none")};
`;
const Picked = styled(PlainButton)`
  width: 79px;
  height: 27px;
  justify-content: flex-end;
  margin-left: 70px;
  padding-right: 6px;
  border: 1px solid #52b5e2;
  background: #0696d7;
  color: #fff;
`;
const ClearButton = styled(PlainButton)`
  margin-left: 10px;
`;
const Tooltip = styled.div`
  position: absolute;
  right: 134px;
  z-index: 1;
  height: 18px;
  padding: 0 3px 0 4px;
  border: 1px solid #ccc;
  background: #f4f4f4;
  font-family: ${system};
  font-size: 11px;
  line-height: 16px;
  white-space: nowrap;
  color: #000;
`;
const SelectBox = styled.div`
  width: 133px;
  height: 27px;
  display: flex;
  align-items: center;
  padding: 0 3px 0 1px;
  border: 2px solid #dedede;
  border-radius: 2px;
  background: #fff;
  select {
    flex: 1;
    appearance: none;
    margin-left: 4px;
    padding: 0;
    border: 0;
    background: none;
  }
`;
const Field = styled.input`
  width: 133px;
  height: 26px;
  padding: 0 2px;
  border: 1px solid #c4c4c4;
  background: #fff;
`;
const Divider = styled.hr`
  height: 1px;
  margin: 5px 13px 4px 1px;
  border: 0;
  background: #c8c8c8;
`;
const EditFooter = styled.footer`
  height: 36px;
  display: flex;
  align-items: center;
  gap: 10px;
  margin-top: 1px;
  padding: 0 11px 0 8px;
  border-top: 1px solid #cfcfcf;
  svg {
    margin-right: auto;
  }
`;
const DialogButton = styled.button`
  width: 60px;
  height: 19px;
  padding: 0;
  border: 1px solid #adadad;
  background: #e8e8e8;
  font-size: 12px;
  line-height: 16px;
  color: #666;
`;
const Comments = styled.aside`
  position: absolute;
  bottom: 4px;
  left: 4px;
`;
const NavBar = styled.div`
  position: absolute;
  bottom: 6px;
  left: 50%;
  height: 24px;
  display: flex;
  align-items: center;
  gap: 7px;
  padding: 0 1px 0 3px;
  transform: translateX(-50%);
  background: #f1f1f1;
`;
const NavButton = styled(PlainButton)`
  gap: 2px;
`;
const Status = styled.output`
  position: absolute;
  right: 16px;
  bottom: 10px;
  font-weight: 700;
  color: #f1f1f1;
`;
const Timeline = styled.footer`
  flex: none;
  height: 46px;
  display: flex;
  align-items: flex-start;
  padding: 10px 14px 0 9px;
  border-top: 1px solid #dadada;
  background: #f1f1f1;
`;
const Playback = styled.div`
  height: 28px;
  display: flex;
  align-items: center;
  gap: 11px;
  margin-right: 19px;
`;
const History = styled.div`
  padding-top: 1px;
`;
const Features = styled.div`
  display: flex;
`;
const Feature = styled(PlainButton)`
  width: 24px;
  height: 24px;
  justify-content: center;
  border-radius: 2px;
  background: ${(props) => (props.$active ? "#0696d7" : "none")};
`;
const Marker = styled(IconSvg)`
  margin-left: -6px;
`;
const SettingsButton = styled(PlainButton)`
  height: 28px;
  margin-left: auto;
`;
const Taskbar = styled.div`
  flex: none;
  height: 5px;
  background: #131313;
`;
